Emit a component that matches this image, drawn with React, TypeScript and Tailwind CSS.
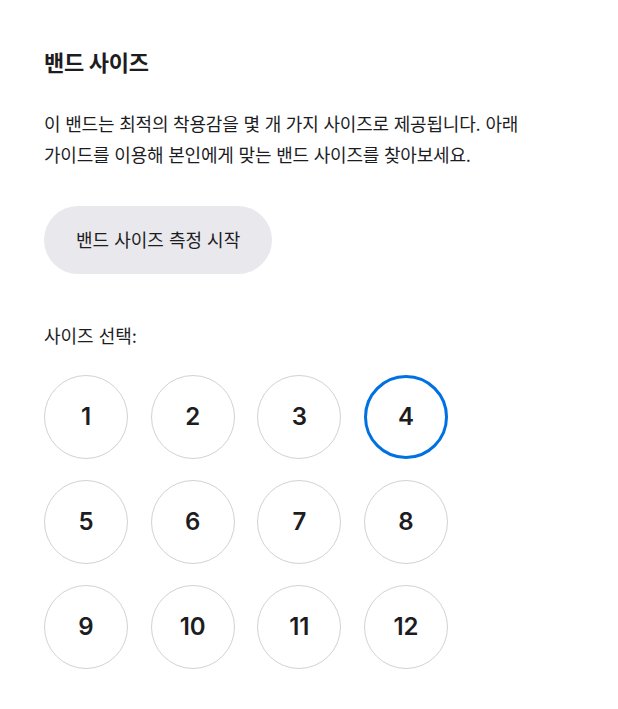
import React, { useState } from "react";

const sizes = [1, 2, 3, 4, 5, 6, 7, 8, 9, 10, 11, 12];

export default function App() {
  const [selected, setSelected] = useState(4);
  return (
    <div
      className="min-h-screen bg-white text-[#1d1d1f] px-[44px] pt-[47px]"
      style={{ fontFamily: '"Inter", "Noto Sans CJK KR", sans-serif' }}
    >
      <h2 className="text-[22px] font-bold leading-[32px] tracking-[-0.3px]">밴드 사이즈</h2>
      <p className="mt-[30px] text-[18px] leading-[31px] tracking-[-0.2px] w-[520px]">
        이 밴드는 최적의 착용감을 몇 개 가지 사이즈로 제공됩니다. 아래
        <br />
        가이드를 이용해 본인에게 맞는 밴드 사이즈를 찾아보세요.
      </p>
      <button className="mt-[35px] h-[68px] px-[32px] rounded-full bg-[#e8e8ed] text-[18px] text-[#1d1d1f]">
        밴드 사이즈 측정 시작
      </button>
      <div className="mt-[51px] text-[18px] leading-[24px]">사이즈 선택:</div>
      <div className="mt-[26px] grid grid-cols-[repeat(4,84px)] gap-x-[22.67px] gap-y-[21px]">
        {sizes.map((s) => (
          <button
            key={s}
            onClick={() => setSelected(s)}
            className={
              s === selected
                ? "w-[84px] h-[84px] rounded-full border-[3px] border-[#0071e3] flex items-center justify-center text-[24px] font-semibold"
                : "w-[84px] h-[84px] rounded-full border border-[#d2d2d7] flex items-center justify-center text-[24px] font-semibold"
            }
          >
            {s}
          </button>
        ))}
      </div>
    </div>
  );
}
